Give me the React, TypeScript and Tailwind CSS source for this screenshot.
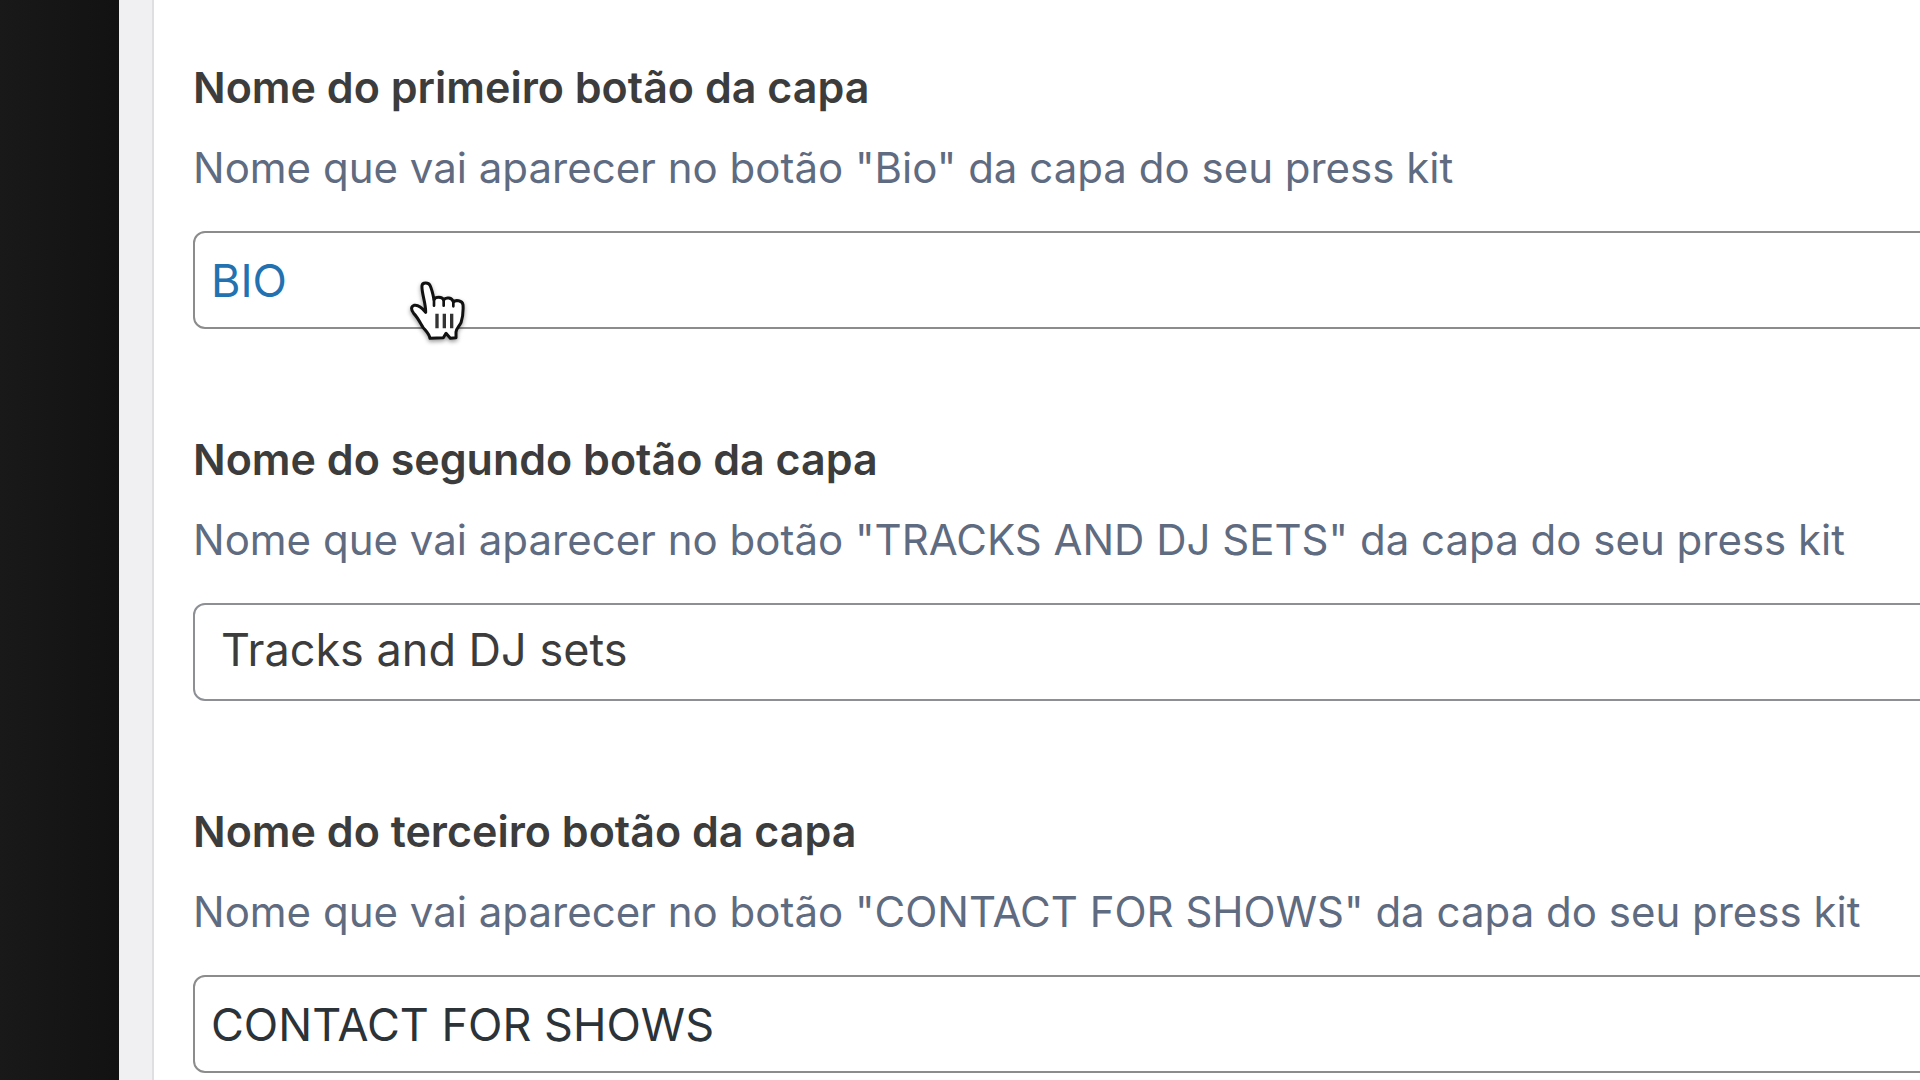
import { useState } from 'react';

interface FieldProps {
  id: string;
  label: string;
  description: string;
  children: React.ReactNode;
}

function Field({ id, label, description, children }: FieldProps) {
  return (
    <div className="mb-[102px]">
      <label htmlFor={id} className="block mb-[25px] text-[43px] leading-[56px] font-semibold text-[#3c3c3c] whitespace-nowrap">
        {label}
      </label>
      <p className="mb-[35px] text-[42px] leading-[56px] text-[#5f6b80] whitespace-nowrap">{description}</p>
      {children}
    </div>
  );
}

function HandCursor() {
  return (
    <svg
      viewBox="81 54 189 204"
      className="absolute left-[214px] top-[47px] w-[63px] h-[68px] pointer-events-none drop-shadow-[0_2px_2px_rgba(0,0,0,0.4)]"
      aria-hidden="true"
    >
      <path
        d="M126 77 C127 67 145 66 150 76 C156 88 159 103 162 119 C166 110 187 109 191 120 C197 110 217 112 220 126 C226 119 247 121 249 134 C250 150 249 170 243 188 C238 199 229 205 228 216 L228 233 L211 235 L198 220 L190 233 L150 235 C147 220 137 212 129 202 C120 187 112 171 101 160 C93 151 92 139 102 136 C117 133 127 144 137 157 C138 130 124 98 126 77 Z"
        fill="#fff"
        stroke="#111"
        strokeWidth="9"
        strokeLinejoin="round"
      />
      <path d="M162 117 V137 M191 118 V137 M220 124 V139" stroke="#111" strokeWidth="8" strokeLinecap="round" />
      <path d="M171 161 V205 M193 161 V205 M215 161 V205" stroke="#333" strokeWidth="10" />
    </svg>
  );
}

export default function App() {
  const [tracks, setTracks] = useState('Tracks and DJ sets');

  return (
    <div className="flex h-screen overflow-hidden bg-[#f0f0f2] font-['Inter','Liberation_Sans',sans-serif]">
      <aside className="w-[119px] shrink-0 bg-linear-to-r from-[#191919] to-[#121212]" />

      <main className="ml-[33px] flex-1 min-w-0 border-l-2 border-[#dfdfe1] bg-white pt-[59px] pl-[39px]">
        <Field
          id="first-button"
          label="Nome do primeiro botão da capa"
          description={'Nome que vai aparecer no botão "Bio" da capa do seu press kit'}
        >
          {/* Boxes run past the right edge of the window */}
          <div className="relative -mr-16">
            <select
              id="first-button"
              className="block w-full h-[98px] appearance-none rounded-xl border-2 border-[#8c8c8c] bg-white px-4 pt-0.5 text-[45px] text-[#2271b1] cursor-pointer"
            >
              <option>BIO</option>
            </select>
            <HandCursor />
          </div>
        </Field>

        <Field
          id="second-button"
          label="Nome do segundo botão da capa"
          description={'Nome que vai aparecer no botão "TRACKS AND DJ SETS" da capa do seu press kit'}
        >
          <div className="-mr-16">
            <input
              id="second-button"
              type="text"
              value={tracks}
              onChange={(e) => setTracks(e.target.value)}
              className="block w-full h-[98px] rounded-xl border-2 border-[#8c8f94] bg-white px-[26px] pb-1.5 text-[45px] text-[#3c3c3c]"
            />
          </div>
        </Field>

        <Field
          id="third-button"
          label="Nome do terceiro botão da capa"
          description={'Nome que vai aparecer no botão "CONTACT FOR SHOWS" da capa do seu press kit'}
        >
          <div className="-mr-16">
            <select
              id="third-button"
              className="block w-full h-[98px] appearance-none rounded-xl border-2 border-[#8c8c8c] bg-white px-4 pt-0.5 text-[45px] text-[#2c3338] cursor-pointer"
            >
              <option>CONTACT FOR SHOWS</option>
            </select>
          </div>
        </Field>
      </main>
    </div>
  );
}
